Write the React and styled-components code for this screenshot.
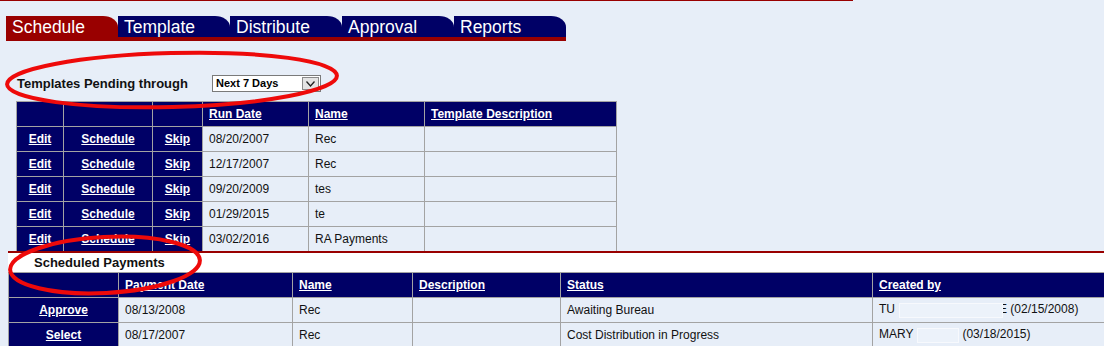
import React from "react";
import styled, { createGlobalStyle } from "styled-components";

const GlobalStyle = createGlobalStyle`
  html, body { margin: 0; padding: 0; background: #e7eef8; overflow: hidden; }
  body { font-family: "Liberation Sans", Arial, sans-serif; color: #111; }
`;

const NAVY = "#000066";
const RED = "#990000";
const GRID = "#a3a3a3";
const BG = "#e7eef8";

const Page = styled.div`
  position: relative;
  width: 1104px;
  height: 346px;
  overflow: hidden;
  background: ${BG};
`;

const TopRule = styled.div`
  width: 853px;
  height: 1px;
  background: ${RED};
`;

const TabBar = styled.nav`
  display: flex;
  width: 560px;
  margin: 15px 0 0 6px;
  border-bottom: 4px solid ${RED};
`;

const Tab = styled.div`
  width: 112px;
  height: 21px;
  box-sizing: border-box;
  padding: 1px 0 0 6px;
  background: ${(p) => (p.$active ? RED : NAVY)};
  color: #fff;
  font-size: 17.5px;
  line-height: 20px;
  border-top-right-radius: 15px 11px;
  white-space: nowrap;
`;

const FilterRow = styled.div`
  display: flex;
  align-items: center;
  height: 17px;
  margin: 34px 0 0 17px;
`;

const FilterLabel = styled.span`
  width: 195px;
  font-size: 13px;
  font-weight: bold;
  color: #111;
`;

const SelectBox = styled.div`
  display: flex;
  align-items: stretch;
  width: 109px;
  height: 17px;
  box-sizing: border-box;
  border: 1px solid #7a7a7a;
  background: #fff;
`;

const SelectText = styled.span`
  flex: 1;
  padding-left: 3px;
  font-size: 11px;
  font-weight: bold;
  line-height: 15px;
  color: #000;
`;

const SelectArrow = styled.span`
  display: flex;
  align-items: center;
  justify-content: center;
  width: 17px;
  margin: 1px 1px 1px 0;
  box-sizing: border-box;
  border: 1px solid #8a8a8a;
  background: #e4e4e4;
`;

const Grid = styled.table`
  border-collapse: collapse;
  table-layout: fixed;
  width: ${(p) => p.$width}px;
  margin-left: ${(p) => p.$left}px;
  margin-top: ${(p) => p.$top || 0}px;
  font-size: 12px;
`;

const HeadCell = styled.th`
  height: 24px;
  padding: 0 0 0 6px;
  background: ${NAVY};
  border: 1px solid ${GRID};
  text-align: left;
  font-weight: bold;
`;

const ActionCell = styled.td`
  height: 24px;
  padding: 0;
  background: ${NAVY};
  border: 1px solid ${GRID};
  text-align: center;
`;

const DataCell = styled.td`
  height: 24px;
  padding: 0 0 0 6px;
  background: ${BG};
  border: 1px solid ${GRID};
  color: #111;
  white-space: nowrap;
  overflow: hidden;
`;

const Link = styled.a`
  color: #fff;
  font-weight: bold;
  text-decoration: underline;
  cursor: pointer;
`;

const Section = styled.section`
  margin: -1px 0 0 8px;
  border-top: 2px solid ${RED};
  position: relative;
`;

const SectionTitle = styled.div`
  height: 19px;
  padding-left: 26px;
  background: #fff;
  font-size: 13px;
  font-weight: bold;
  line-height: 20px;
  color: #111;
`;

const Redact = styled.span`
  display: inline-block;
  position: relative;
  vertical-align: middle;
  width: ${(p) => p.$w}px;
  height: 15px;
  margin: 0 ${(p) => p.$mr}px 0 ${(p) => p.$ml}px;
  box-sizing: border-box;
  border: 1px solid #f7f9fd;
  background: #ecf2fa;
`;

const Annotations = styled.svg`
  position: absolute;
  left: 0;
  top: 0;
  pointer-events: none;
`;

const templates = [
  ["08/20/2007", "Rec"],
  ["12/17/2007", "Rec"],
  ["09/20/2009", "tes"],
  ["01/29/2015", "te"],
  ["03/02/2016", "RA Payments"],
];

const tabs = ["Schedule", "Template", "Distribute", "Approval", "Reports"];

export default function App() {
  return (
    <Page>
      <GlobalStyle />
      <TopRule />
      <TabBar>
        {tabs.map((t, i) => (
          <Tab key={t} $active={i === 0}>{t}</Tab>
        ))}
      </TabBar>

      <FilterRow>
        <FilterLabel>Templates Pending through</FilterLabel>
        <SelectBox>
          <SelectText>Next 7 Days</SelectText>
          <SelectArrow>
            <svg width="9" height="6" viewBox="0 0 9 6">
              <path d="M0.5 0.5 L4.5 5 L8.5 0.5" fill="none" stroke="#222" strokeWidth="1.3" />
            </svg>
          </SelectArrow>
        </SelectBox>
      </FilterRow>

      <Grid $width={600} $left={16} $top={9}>
        <colgroup>
          <col width="47" />
          <col width="89" />
          <col width="50" />
          <col width="106" />
          <col width="116" />
          <col width="192" />
        </colgroup>
        <thead>
          <tr>
            <HeadCell />
            <HeadCell />
            <HeadCell />
            <HeadCell><Link>Run Date</Link></HeadCell>
            <HeadCell><Link>Name</Link></HeadCell>
            <HeadCell><Link>Template Description</Link></HeadCell>
          </tr>
        </thead>
        <tbody>
          {templates.map(([d, n], i) => (
            <tr key={i}>
              <ActionCell><Link>Edit</Link></ActionCell>
              <ActionCell><Link>Schedule</Link></ActionCell>
              <ActionCell><Link>Skip</Link></ActionCell>
              <DataCell>{d}</DataCell>
              <DataCell>{n}</DataCell>
              <DataCell />
            </tr>
          ))}
        </tbody>
      </Grid>

      <Section>
        <SectionTitle>Scheduled Payments</SectionTitle>
        <Grid $width={1102} $left={0}>
          <colgroup>
            <col width="110" />
            <col width="174" />
            <col width="120" />
            <col width="148" />
            <col width="312" />
            <col width="238" />
          </colgroup>
          <thead>
            <tr>
              <HeadCell />
              <HeadCell><Link>Payment Date</Link></HeadCell>
              <HeadCell><Link>Name</Link></HeadCell>
              <HeadCell><Link>Description</Link></HeadCell>
              <HeadCell><Link>Status</Link></HeadCell>
              <HeadCell><Link>Created by</Link></HeadCell>
            </tr>
          </thead>
          <tbody>
            <tr>
              <ActionCell><Link>Approve</Link></ActionCell>
              <DataCell>08/13/2008</DataCell>
              <DataCell>Rec</DataCell>
              <DataCell />
              <DataCell>Awaiting Bureau</DataCell>
              <DataCell>
                TU<Redact $w={104} $ml={4} $mr={-4} />E (02/15/2008)
              </DataCell>
            </tr>
            <tr>
              <ActionCell><Link>Select</Link></ActionCell>
              <DataCell>08/17/2007</DataCell>
              <DataCell>Rec</DataCell>
              <DataCell />
              <DataCell>Cost Distribution in Progress</DataCell>
              <DataCell>
                MARY<Redact $w={42} $ml={4} $mr={3} />(03/18/2015)
              </DataCell>
            </tr>
          </tbody>
        </Grid>
      </Section>

      <Annotations width="1104" height="346" viewBox="0 0 1104 346">
        <ellipse cx="172" cy="80" rx="165" ry="27" fill="none" stroke="#ee0a0a" strokeWidth="4" transform="rotate(-1.5 172 80)" />
        <ellipse cx="105" cy="265" rx="95" ry="28" fill="none" stroke="#ee0a0a" strokeWidth="4" transform="rotate(-3 105 265)" />
      </Annotations>
    </Page>
  );
}
